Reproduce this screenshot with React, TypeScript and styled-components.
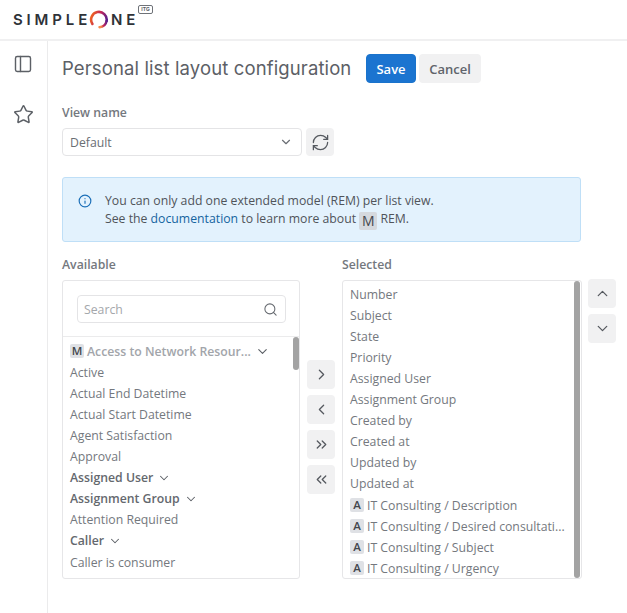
import React from "react";
import styled, { createGlobalStyle } from "styled-components";
import {
  ChevronDown,
  ChevronLeft,
  ChevronRight,
  ChevronUp,
  ChevronsLeft,
  ChevronsRight,
  Info,
  PanelLeft,
  RefreshCw,
  Search,
  Star,
} from "lucide-react";

const GlobalStyle = createGlobalStyle`
  html, body {
    margin: 0;
    padding: 0;
    background: #fff;
    font-family: "Open Sans", "Noto Sans", sans-serif;
    color: #60646b;
    overflow: hidden;
  }
  * { box-sizing: border-box; }
`;

type Row = { label: string; badge?: string; bold?: boolean; muted?: boolean };

const availableRows: Row[] = [
  { label: "Access to Network Resour...", badge: "M", bold: true, muted: true },
  { label: "Active" },
  { label: "Actual End Datetime" },
  { label: "Actual Start Datetime" },
  { label: "Agent Satisfaction" },
  { label: "Approval" },
  { label: "Assigned User", bold: true },
  { label: "Assignment Group", bold: true },
  { label: "Attention Required" },
  { label: "Caller", bold: true },
  { label: "Caller is consumer" },
];

const selectedRows: Row[] = [
  { label: "Number" },
  { label: "Subject" },
  { label: "State" },
  { label: "Priority" },
  { label: "Assigned User" },
  { label: "Assignment Group" },
  { label: "Created by" },
  { label: "Created at" },
  { label: "Updated by" },
  { label: "Updated at" },
  { label: "IT Consulting / Description", badge: "A" },
  { label: "IT Consulting / Desired consultati...", badge: "A" },
  { label: "IT Consulting / Subject", badge: "A" },
  { label: "IT Consulting / Urgency", badge: "A" },
];

const LogoRing = () => (
  <svg width="20" height="19" viewBox="0 0 20 19" fill="none">
    <defs>
      <linearGradient id="ringTop" x1="0" y1="0.3" x2="1" y2="0.6">
        <stop offset="0" stopColor="#f0641e" />
        <stop offset="0.5" stopColor="#c2265a" />
        <stop offset="1" stopColor="#5a1f8c" />
      </linearGradient>
      <linearGradient id="ringBottom" x1="1" y1="0" x2="0" y2="0.4">
        <stop offset="0" stopColor="#5a1f8c" />
        <stop offset="0.6" stopColor="#c2265a" />
        <stop offset="1" stopColor="#f58a4a" />
      </linearGradient>
    </defs>
    <path
      d="M3.4 14A7.8 7.8 0 1 1 17.6 11"
      stroke="url(#ringTop)"
      strokeWidth="2.6"
      strokeLinecap="round"
    />
    <path
      d="M17.6 11A7.8 7.8 0 0 1 10.5 17.2"
      stroke="url(#ringBottom)"
      strokeWidth="2.4"
      strokeLinecap="round"
    />
  </svg>
);

const ListRows = ({ rows }: { rows: Row[] }) => (
  <>
    {rows.map((row) => (
      <ListRow key={row.label} $bold={row.bold} $muted={row.muted}>
        {row.badge && <Badge>{row.badge}</Badge>}
        <span>{row.label}</span>
        {row.bold && <RowChevron size={row.muted ? 15 : 14} strokeWidth={1.8} />}
      </ListRow>
    ))}
  </>
);

const App = () => (
  <>
    <GlobalStyle />
    <Page>
      <Header>
        <Logo>
          SIMPLE
          <LogoRing />
          NE
          <ItsmTag>ITG</ItsmTag>
        </Logo>
      </Header>
      <Body>
        <Sidebar>
          <PanelLeft size={20} strokeWidth={1.7} />
          <Star size={21} strokeWidth={1.7} />
        </Sidebar>
        <Content>
          <TitleRow>
            <Title>Personal list layout configuration</Title>
            <SaveButton>Save</SaveButton>
            <CancelButton>Cancel</CancelButton>
          </TitleRow>
          <FieldLabel>View name</FieldLabel>
          <ViewRow>
            <Select>
              Default
              <ChevronDown size={14} strokeWidth={2} />
            </Select>
            <RefreshButton>
              <RefreshCw size={19} strokeWidth={1.6} />
            </RefreshButton>
          </ViewRow>
          <Notice>
            <NoticeIcon>
              <Info size={14} strokeWidth={2} />
            </NoticeIcon>
            <div>
              You can only add one extended model (REM) per list view.
              <br />
              See the <NoticeLink>documentation</NoticeLink> to learn more about{" "}
              <NoticeBadge>M</NoticeBadge> REM.
            </div>
          </Notice>
          <Columns>
            <Column>
              <FieldLabel>Available</FieldLabel>
              <AvailablePanel>
                <SearchArea>
                  <SearchBox>
                    Search
                    <Search size={15} strokeWidth={1.7} />
                  </SearchBox>
                </SearchArea>
                <AvailableList>
                  <ListRows rows={availableRows} />
                  <AvailableThumb />
                </AvailableList>
              </AvailablePanel>
            </Column>
            <TransferButtons>
              <IconButton>
                <ChevronRight size={17} strokeWidth={1.8} />
              </IconButton>
              <IconButton>
                <ChevronLeft size={17} strokeWidth={1.8} />
              </IconButton>
              <IconButton>
                <ChevronsRight size={17} strokeWidth={1.8} />
              </IconButton>
              <IconButton>
                <ChevronsLeft size={17} strokeWidth={1.8} />
              </IconButton>
            </TransferButtons>
            <Column>
              <FieldLabel>Selected</FieldLabel>
              <SelectedPanel>
                <ListRows rows={selectedRows} />
                <SelectedThumb />
              </SelectedPanel>
            </Column>
            <OrderButtons>
              <IconButton>
                <ChevronUp size={17} strokeWidth={1.8} />
              </IconButton>
              <IconButton>
                <ChevronDown size={17} strokeWidth={1.8} />
              </IconButton>
            </OrderButtons>
          </Columns>
        </Content>
      </Body>
    </Page>
  </>
);

export default App;

const Page = styled.div`
  width: 627px;
  height: 613px;
  display: flex;
  flex-direction: column;
  overflow: hidden;
`;

const Header = styled.header`
  height: 41px;
  flex: none;
  display: flex;
  align-items: flex-start;
  padding: 9px 0 0 13px;
  border-bottom: 2px solid #f0f0f1;
`;

const Logo = styled.div`
  position: relative;
  display: flex;
  align-items: center;
  height: 20px;
  font-family: "Inter", "Liberation Sans", sans-serif;
  font-size: 15px;
  font-weight: 600;
  letter-spacing: 3.85px;
  color: #2e3238;
  svg {
    margin: 0 2px 0 -2px;
  }
`;

const ItsmTag = styled.span`
  position: absolute;
  left: 125px;
  top: -4px;
  width: 15px;
  height: 9px;
  border: 1px solid #6e7278;
  border-radius: 2px;
  font-size: 5px;
  font-weight: 700;
  line-height: 7px;
  letter-spacing: 0;
  text-align: center;
  color: #5a5e64;
`;

const Body = styled.div`
  flex: 1;
  display: flex;
  min-height: 0;
`;

const Sidebar = styled.nav`
  width: 48px;
  flex: none;
  display: flex;
  flex-direction: column;
  align-items: center;
  gap: 30px;
  padding: 13px 1px 0 0;
  border-right: 1px solid #ebebec;
  color: #5c6066;
`;

const Content = styled.main`
  flex: 1;
  min-width: 0;
  padding: 13px 0 0 14px;
`;

const TitleRow = styled.div`
  display: flex;
  align-items: center;
  height: 29px;
  margin-bottom: 20px;
`;

const Title = styled.h1`
  width: 304px;
  margin: 0;
  padding-bottom: 2px;
  font-family: "Inter", "Noto Sans", sans-serif;
  font-size: 18.5px;
  font-weight: 400;
  letter-spacing: 0.12px;
  white-space: nowrap;
  color: #5c6066;
`;

const SaveButton = styled.button`
  width: 50px;
  height: 29px;
  margin-right: 3px;
  border: 1px solid #1a73cc;
  border-radius: 4px;
  background: #1b74d0;
  color: #fff;
  font: 600 13px "Open Sans", sans-serif;
`;

const CancelButton = styled.button`
  width: 62px;
  height: 29px;
  border: 0;
  border-radius: 4px;
  background: #f1f1f2;
  color: #60646b;
  font: 600 13px "Open Sans", sans-serif;
`;

const FieldLabel = styled.div`
  height: 18px;
  margin-bottom: 7px;
  font-size: 12.25px;
  font-weight: 600;
  line-height: 20px;
  color: #74787e;
`;

const ViewRow = styled.div`
  display: flex;
  gap: 4px;
  height: 28px;
  margin-bottom: 21px;
`;

const Select = styled.div`
  width: 240px;
  display: flex;
  align-items: center;
  justify-content: space-between;
  padding: 0 8px 0 7px;
  border: 1px solid #e4e4e6;
  border-radius: 4px;
  font-size: 12.25px;
  color: #6a6e74;
`;

const IconButton = styled.button`
  width: 28px;
  height: 29px;
  display: flex;
  align-items: center;
  justify-content: center;
  padding: 0;
  border: 0;
  border-radius: 4px;
  background: #f1f1f2;
  color: #55595f;
`;

const RefreshButton = styled(IconButton)`
  height: 28px;
`;

const Notice = styled.div`
  width: 519px;
  height: 65px;
  display: flex;
  align-items: flex-start;
  padding: 14px 0 0 15px;
  border: 1px solid #bfdff7;
  border-radius: 3px;
  background: #e3f2fd;
  font-size: 12.25px;
  line-height: 17.5px;
  color: #50545a;
`;

const NoticeIcon = styled.span`
  display: flex;
  width: 27px;
  flex: none;
  padding-top: 2px;
  color: #1b6fb8;
`;

const NoticeLink = styled.span`
  color: #14649f;
`;

const Columns = styled.div`
  display: flex;
  align-items: flex-start;
  margin-top: 13px;
`;

const Column = styled.div`
  display: flex;
  flex-direction: column;
`;

const AvailablePanel = styled.div`
  width: 238px;
  height: 299px;
  display: flex;
  flex-direction: column;
  border: 1px solid #e6e6e8;
  border-radius: 3px;
  overflow: hidden;
`;

const SearchArea = styled.div`
  height: 56px;
  flex: none;
  padding: 14px 13px 0 14px;
  border-bottom: 1px solid #ebebec;
`;

const SearchBox = styled.div`
  height: 28px;
  display: flex;
  align-items: center;
  justify-content: space-between;
  padding: 0 7px 0 6px;
  border: 1px solid #e4e4e6;
  border-radius: 4px;
  font-size: 12.25px;
  color: #a4a7ab;
  svg {
    color: #65696f;
  }
`;

const AvailableList = styled.div`
  position: relative;
  flex: 1;
  min-height: 0;
  padding: 3.7px 7px;
  overflow: hidden;
`;

const SelectedPanel = styled.div`
  position: relative;
  width: 240px;
  height: 299px;
  padding: 2.7px 7px;
  border: 1px solid #e6e6e8;
  border-radius: 3px;
  overflow: hidden;
`;

const ListRow = styled.div<{ $bold?: boolean; $muted?: boolean }>`
  display: flex;
  align-items: center;
  height: 21.08px;
  font-size: 12.25px;
  font-weight: ${({ $bold }) => ($bold ? 600 : 400)};
  white-space: nowrap;
  color: ${({ $muted, $bold }) =>
    $muted ? "#a2a5aa" : $bold ? "#64686e" : "#74787e"};
`;

const RowChevron = styled(ChevronDown)`
  margin-left: 4px;
  color: #5c6066;
`;

const Badge = styled.span`
  display: inline-block;
  flex: none;
  width: 14px;
  height: 14px;
  margin-right: 3px;
  border-radius: 2px;
  background: #dfe1e5;
  font-size: 11.5px;
  font-weight: 600;
  line-height: 14px;
  text-align: center;
  color: #43474d;
  vertical-align: -1px;
`;

const NoticeBadge = styled(Badge)`
  width: 18px;
  height: 18px;
  margin: 0;
  line-height: 18px;
  font-size: 14px;
  font-weight: 500;
  background: #d5d9de;
  vertical-align: -3px;
`;

const Thumb = styled.div`
  position: absolute;
  right: 0;
  width: 6px;
  border-radius: 3px;
  background: #a3a3a3;
`;

const AvailableThumb = styled(Thumb)`
  top: 0;
  height: 33px;
`;

const SelectedThumb = styled(Thumb)`
  top: 0;
  right: 1px;
  height: 297px;
`;

const TransferButtons = styled.div`
  display: flex;
  flex-direction: column;
  gap: 6px;
  margin: 105px 7px 0 7px;
`;

const OrderButtons = styled.div`
  display: flex;
  flex-direction: column;
  gap: 6px;
  margin: 24px 0 0 6px;
`;
